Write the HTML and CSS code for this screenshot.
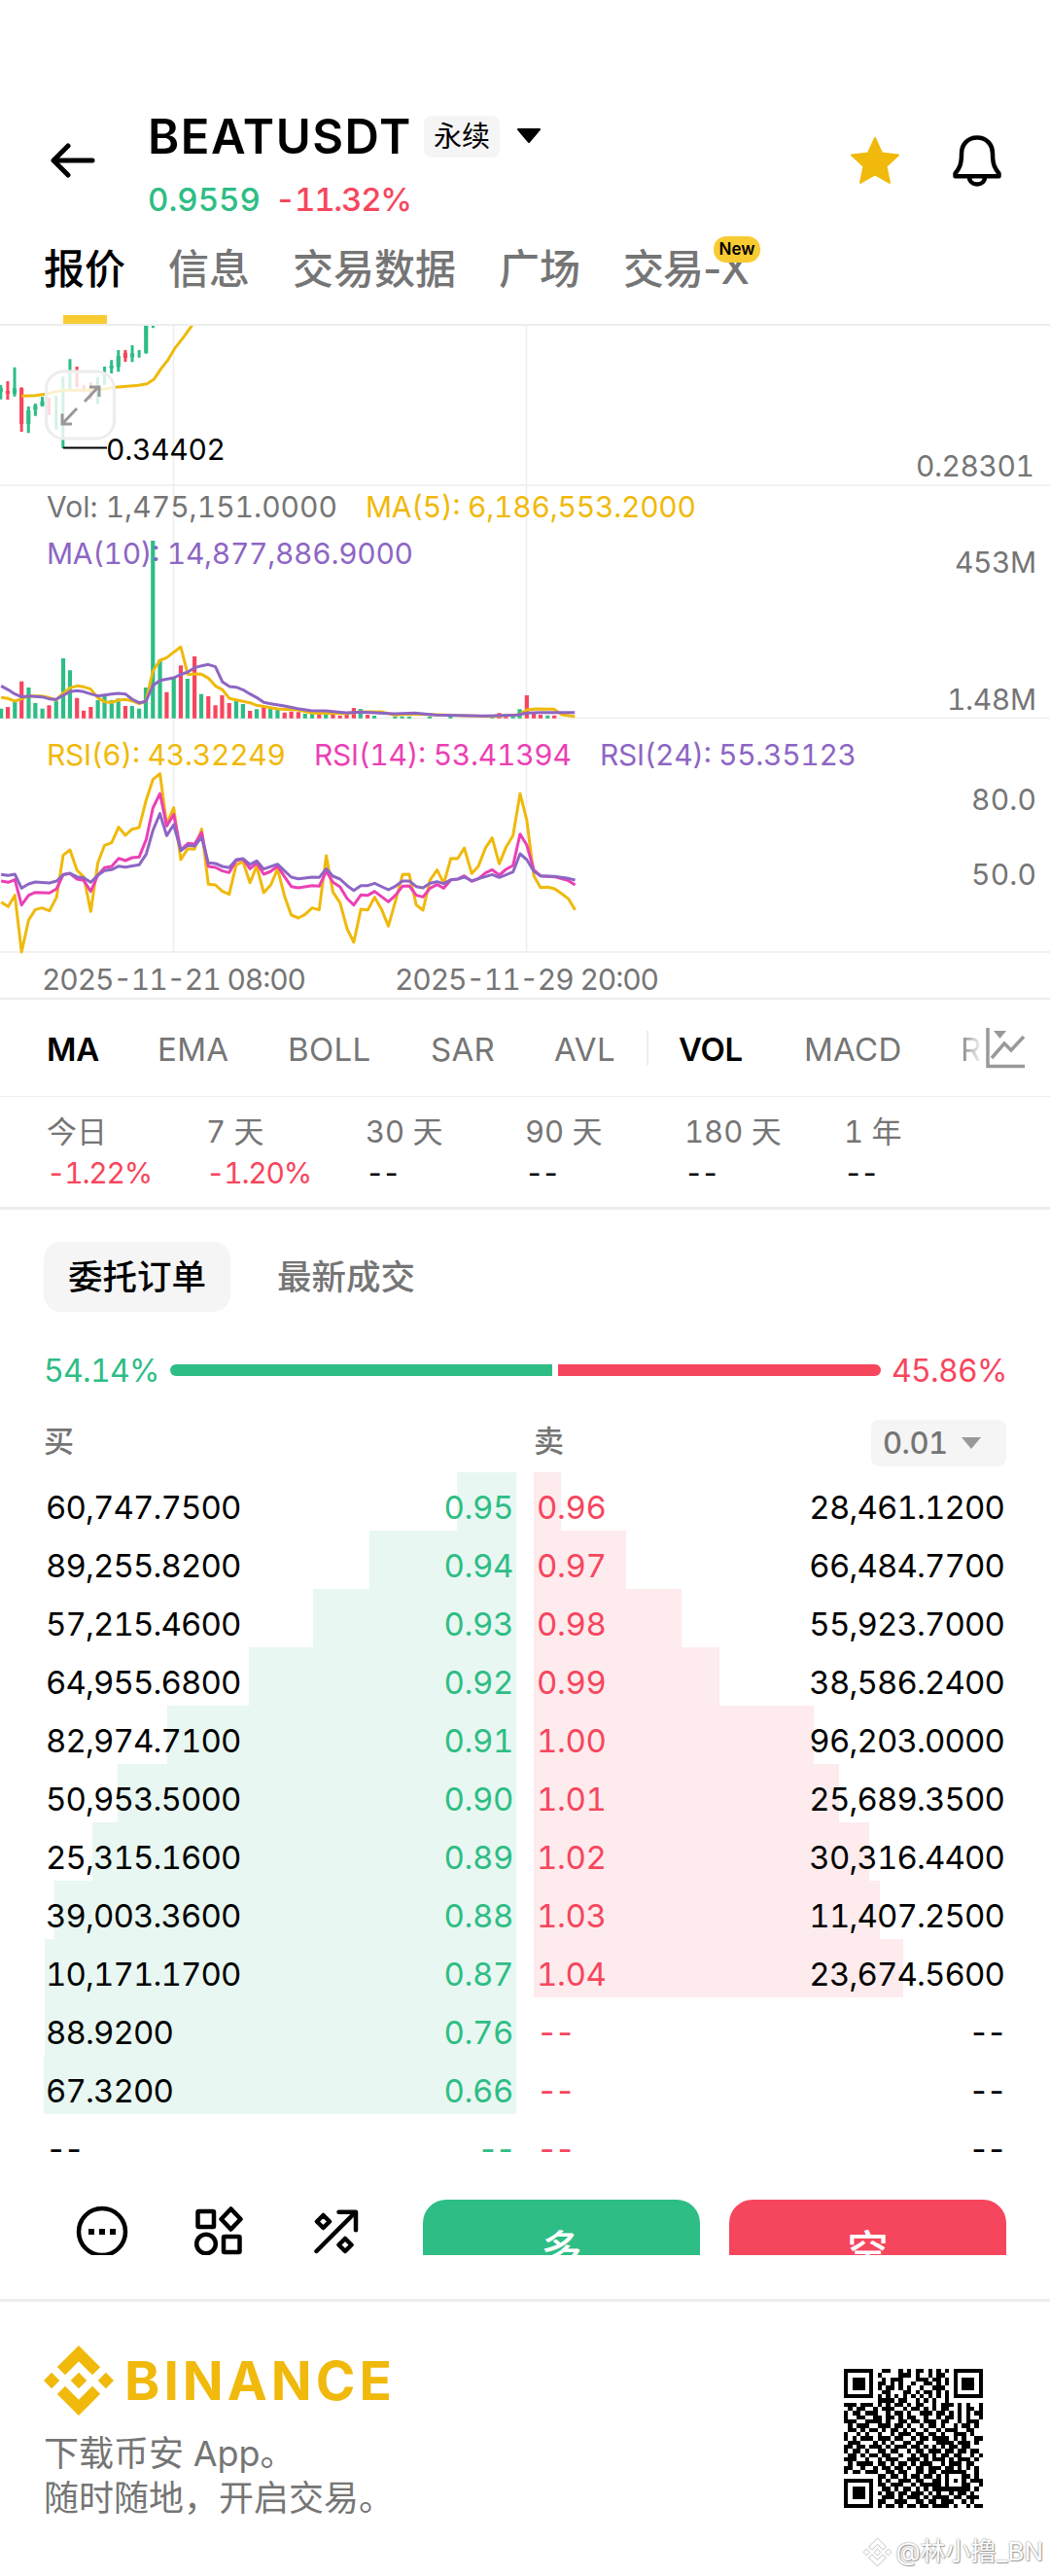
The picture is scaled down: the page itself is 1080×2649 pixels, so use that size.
FILE: index.html
```html
<!DOCTYPE html>
<html lang="zh-CN">
<head>
  <meta charset="UTF-8">
  <meta name="viewport" content="width=device-width, initial-scale=1.0">
  <title>BEATUSDT 永续 | Binance</title>
  <link rel="stylesheet" href="styles.css">
</head>
<body>
  <header class="header">
    <svg class="back" viewBox="0 0 46 36"><path d="M18 3L3 18l15 15M4 18h39"/></svg>
    <div class="pair">
      <div class="pair-title">
        <h1>BEATUSDT</h1>
        <span class="chip">永续</span>
        <svg class="caret" viewBox="0 0 28 18"><path d="M3 2h22L14 15z"/></svg>
      </div>
      <div class="pair-price"><span class="up">0.9559</span><span class="down">-11.32%</span></div>
    </div>
    <svg class="star" viewBox="0 0 52 50"><path d="M26 2l7 15.500 17 2-12.500 11.500 3.500 17L26 39.500 11 48l3.500-17L2 19.500l17-2z"/></svg>
    <svg class="bell" viewBox="0 0 52 54"><path d="M26 3.500c-10 0-16 7.500-16 16.500 0 11-2 15-6.500 20.500v2.800h45v-2.800C44 35 42 31 42 20c0-9-6-16.500-16-16.500zM18 44c0 4.500 3.500 7.500 8 7.500s8-3 8-7.500"/></svg>
  </header>

  <nav class="tabs">
    <span class="tab active">报价</span>
    <span class="tab">信息</span>
    <span class="tab">交易数据</span>
    <span class="tab">广场</span>
    <span class="tab">交易-X<em class="new">New</em></span>
  </nav>

  <section class="chart">
    <svg viewBox="0 335 1080 691" width="1080" height="691">
      <path class="grid" d="M178.500 335V979M541.500 335V979M0 499H1080M0 738.500H1080M0 979H1080"/>

      <!-- price -->
      <svg x="0" y="335" width="620" height="175" viewBox="0 15 1568 525" preserveAspectRatio="none">
        <path class="candle green" d="M2 198V242M38 143V233M74 264V346M92 255V293M110 234V264M146 230V335M164 172V393M182 118V210M254 174V256M272 141V197M290 121V162M308 90V157M344 75V127M362 90V113M380 0V101M398 0V22"/>
        <path class="candle red" d="M20 186V243M56 205V342M128 238V290M200 141V205M218 198V220M236 190V242M326 90V126"/>
        <path class="body green" d="M2 208V220M38 208V225M74 276V318M92 262V274M110 248V262M290 138V146M308 108V142M344 100V112M380 0V98"/>
        <path class="body red" d="M20 216V224M56 208V318M326 98V114"/>
        <path class="line ma5" d="M56 232L92 230L118 226L164 214L200 214L240 213L270 210L300 205L360 199L382 194L400 181L418 149L436 122L454 86L480 46L500 13"/>
      </svg>
      <path class="leader" d="M65 460.500H110"/>
      <text class="black" x="109" y="473" textLength="123">0.34402</text>
      <rect class="expand-box" x="47.500" y="382" width="70" height="69" rx="18"/>
      <path class="expand" d="M87 413l15-16M92 398h10v10M79 420l-15 16M64 425.500V436h10"/>

      <!-- volume -->
      <svg x="0" y="490" width="600" height="260" viewBox="0 0 1568 780" preserveAspectRatio="none">
        <path class="bar green" d="M3 746V716M40 746V696M77 746V651M95 746V699M114 746V716M151 746V692M170 746V561M188 746V598M263 746V690M281 746V678M300 746V690M318 746V685M355 746V708M374 746V716M392 746V651M411 746V198M430 746V565M467 746V622M504 746V624M541 746V671M635 746V692M653 746V702M690 746V718M727 746V712M746 746V720M820 746V732M839 746V732M876 746V732M969 746V717M1006 746V738M1062 746V740M1081 746V740M1100 746V740M1155 746V740M1211 746V741M1323 746V740M1379 746V738M1397 746V718M1472 746V737"/>
        <path class="bar red" d="M21 746V711M58 746V632M132 746V706M207 746V683M225 746V722M244 746V711M337 746V708M448 746V665M486 746V583M523 746V555M560 746V678M579 746V706M597 746V675M616 746V699M672 746V723M709 746V712M765 746V728M783 746V725M802 746V727M858 746V732M895 746V735M914 746V738M932 746V732M951 746V714M988 746V735M1342 746V730M1360 746V738M1416 746V675M1435 746V726M1453 746V735M1490 746V737"/>
      </svg>
      <text class="gray" x="48" y="532" textLength="299">Vol: 1,475,151.0000</text>
      <text class="yellow" x="376" y="532" textLength="340">MA(5): 6,186,553.2000</text>
      <text class="purple" x="48" y="580" textLength="377">MA(10): 14,877,886.9000</text>
      <svg x="0" y="490" width="600" height="260" viewBox="0 0 1568 780" preserveAspectRatio="none">
        <path class="line ma5" d="M3 682L22 685L40 693L58 686L77 677L110 677L132 682L150 690L170 668L188 652L207 646L225 649L244 656L263 683L281 695L300 697L318 690L337 688L355 692L374 701L392 694L411 600L430 567L448 559L467 542L486 526L505 611L523 609L542 610L560 622L579 646L598 658L617 685L635 689L672 698L690 706L746 717L800 720L840 730L930 731L970 726L1025 726L1060 736L1100 733L1180 735L1250 738L1320 740L1395 735L1416 720L1440 717L1490 718L1510 735L1545 740"/>
        <path class="line ma10" d="M3 646L22 658L40 671L58 680L77 677L113 680L132 686L150 688L170 675L188 664L207 661L225 664L244 671L263 677L300 671L318 669L337 671L355 687L374 698L392 694L411 645L430 629L467 621L486 611L505 603L523 590L542 584L560 580L579 587L598 634L617 648L635 650L653 658L672 671L690 682L709 697L728 701L765 708L800 716L835 722L875 723L930 729L970 727L1060 732L1115 730L1170 736L1300 739L1390 736L1416 730L1450 728L1545 728"/>
      </svg>

      <!-- rsi -->
      <svg x="0" y="750" width="600" height="240" viewBox="0 0 1568 720" preserveAspectRatio="none">
        <path class="line ma5" d="M3 533L22 547L40 512L58 687L77 588L95 556L113 551L133 560L152 518L170 388L188 372L207 435L225 455L244 562L263 412L281 358L300 350L319 302L337 327L355 308L374 303L393 218L411 155L430 137L448 292L467 242L486 402L505 368L523 370L542 308L560 478L579 480L598 500L616 509L635 418L653 408L672 473L690 422L709 504L728 480L746 430L765 515L783 573L802 582L820 571L839 551L858 557L877 390L895 502L914 535L933 615L951 657L970 555L989 557L1007 518L1026 556L1044 607L1063 530L1082 448L1100 447L1119 542L1137 558L1156 465L1175 434L1193 475L1212 398L1230 399L1248 366L1268 445L1286 422L1305 366L1323 335L1342 415L1360 364L1379 328L1398 198L1416 280L1435 452L1453 488L1472 487L1491 492L1510 507L1528 523L1546 557"/>
        <path class="line rsi14" d="M3 468L22 472L40 464L58 542L77 512L95 503L133 505L152 492L170 448L188 445L207 462L225 466L244 500L263 450L281 427L300 423L319 398L337 405L355 396L374 394L393 340L411 243L430 198L448 298L467 263L486 372L505 352L523 354L542 318L560 423L579 426L598 437L616 442L635 405L653 400L672 430L690 412L709 447L728 438L746 422L765 455L783 485L802 489L839 482L858 484L877 438L895 472L914 486L933 522L951 542L970 511L989 512L1007 500L1044 532L1063 512L1082 484L1100 483L1119 512L1137 517L1156 490L1175 479L1193 490L1212 464L1230 462L1248 452L1268 469L1286 461L1305 443L1323 433L1342 450L1360 432L1379 420L1398 323L1416 357L1435 434L1453 452L1491 455L1528 467L1546 480"/>
        <path class="line ma10" d="M3 448L22 451L40 447L58 490L77 477L95 471L133 474L152 468L170 449L188 444L207 455L225 458L244 472L263 450L281 436L300 433L319 422L337 425L374 418L393 385L411 312L430 260L448 328L467 294L486 374L505 358L523 360L542 333L560 412L579 414L598 423L616 427L635 402L653 399L672 417L690 406L709 431L746 416L765 437L783 456L802 461L839 456L858 457L877 430L895 453L914 462L933 482L951 497L970 482L989 482L1007 475L1044 495L1063 484L1082 468L1100 468L1119 485L1137 489L1156 475L1175 470L1193 476L1212 464L1230 462L1248 456L1268 467L1286 461L1323 448L1342 457L1360 449L1379 440L1398 384L1416 402L1435 438L1453 452L1491 454L1528 460L1546 465"/>
      </svg>
      <text class="yellow" x="48" y="787" textLength="246">RSI(6): 43.32249</text>
      <text class="magenta" x="323" y="787" textLength="265">RSI(14): 53.41394</text>
      <text class="purple" x="617" y="787" textLength="264">RSI(24): 55.35123</text>

      <text class="gray" x="942" y="490" textLength="122">0.28301</text>
      <text class="gray" x="982" y="589" textLength="84">453M</text>
      <text class="gray" x="974" y="730" textLength="92">1.48M</text>
      <text class="gray" x="999" y="833" textLength="67">80.0</text>
      <text class="gray" x="999" y="910" textLength="67">50.0</text>
      <text class="gray" x="43" y="1018" textLength="272">2025-11-21 08:00</text>
      <text class="gray" x="406" y="1018" textLength="272">2025-11-29 20:00</text>
    </svg>
  </section>

  <section class="indicators">
    <span class="on ma">MA</span>
    <span class="ema">EMA</span>
    <span class="boll">BOLL</span>
    <span class="sar">SAR</span>
    <span class="avl">AVL</span>
    <i class="sep"></i>
    <span class="on vol">VOL</span>
    <span class="macd">MACD</span>
    <span class="fade">R</span>
    <svg class="chart-icon" viewBox="0 0 42 46"><path d="M2 2v39.500h38M6 33l13-15 7 7 13-14"/><path class="solid" d="M8 5h13l-6.500 8z"/></svg>
  </section>

  <section class="periods">
    <div><span>今日</span><b class="down">-1.22%</b></div>
    <div><span>7 天</span><b class="down">-1.20%</b></div>
    <div><span>30 天</span><b>--</b></div>
    <div><span>90 天</span><b>--</b></div>
    <div><span>180 天</span><b>--</b></div>
    <div><span>1 年</span><b>--</b></div>
  </section>

  <section class="book">
    <div class="book-tabs">
      <span class="selected">委托订单</span>
      <span>最新成交</span>
    </div>

    <div class="ratio">
      <span class="up">54.14%</span>
      <div class="ratio-bar"><i class="long"></i><i class="short"></i></div>
      <span class="down">45.86%</span>
    </div>

    <div class="book-head">
      <span>买</span>
      <span class="sell-label">卖</span>
      <span class="step">0.01<svg viewBox="0 0 22 14"><path d="M1 1h20L11 13z"/></svg></span>
    </div>

    <div class="depth">
      <div class="side bids">
        <div class="row"><i style="width:61px"></i><span>60,747.7500</span><b>0.95</b></div>
        <div class="row"><i style="width:151px"></i><span>89,255.8200</span><b>0.94</b></div>
        <div class="row"><i style="width:209px"></i><span>57,215.4600</span><b>0.93</b></div>
        <div class="row"><i style="width:275px"></i><span>64,955.6800</span><b>0.92</b></div>
        <div class="row"><i style="width:359px"></i><span>82,974.7100</span><b>0.91</b></div>
        <div class="row"><i style="width:410px"></i><span>50,953.5000</span><b>0.90</b></div>
        <div class="row"><i style="width:436px"></i><span>25,315.1600</span><b>0.89</b></div>
        <div class="row"><i style="width:475px"></i><span>39,003.3600</span><b>0.88</b></div>
        <div class="row"><i style="width:485px"></i><span>10,171.1700</span><b>0.87</b></div>
        <div class="row"><i style="width:485px"></i><span>88.9200</span><b>0.76</b></div>
        <div class="row"><i style="width:486px"></i><span>67.3200</span><b>0.66</b></div>
        <div class="row empty"><span>--</span><b>--</b></div>
      </div>
      <div class="side asks">
        <div class="row"><i style="width:28px"></i><b>0.96</b><span>28,461.1200</span></div>
        <div class="row"><i style="width:95px"></i><b>0.97</b><span>66,484.7700</span></div>
        <div class="row"><i style="width:152px"></i><b>0.98</b><span>55,923.7000</span></div>
        <div class="row"><i style="width:191px"></i><b>0.99</b><span>38,586.2400</span></div>
        <div class="row"><i style="width:288px"></i><b>1.00</b><span>96,203.0000</span></div>
        <div class="row"><i style="width:314px"></i><b>1.01</b><span>25,689.3500</span></div>
        <div class="row"><i style="width:345px"></i><b>1.02</b><span>30,316.4400</span></div>
        <div class="row"><i style="width:356px"></i><b>1.03</b><span>11,407.2500</span></div>
        <div class="row"><i style="width:380px"></i><b>1.04</b><span>23,674.5600</span></div>
        <div class="row empty"><b>--</b><span>--</span></div>
        <div class="row empty"><b>--</b><span>--</span></div>
        <div class="row empty"><b>--</b><span>--</span></div>
      </div>
    </div>
  </section>

  <section class="actions">
    <svg class="tools" viewBox="0 0 390 57">
      <circle cx="105" cy="33" r="24"/>
      <path class="solid" d="M91 30h6v6h-6zM102 30h6v6h-6zM113 30h6v6h-6z"/>
      <rect x="203.500" y="12" width="16.500" height="16" rx="1"/>
      <path d="M237.500 9.500l10 10.500-10 10.500-10-10.500z"/>
      <circle cx="212" cy="45.500" r="9.800"/>
      <rect x="230" y="38" width="16.500" height="16" rx="1"/>
      <path d="M325.500 53L365 13.500M348.500 12.800h17.500v18.500"/>
      <path d="M332.500 16l6.500 6.500-6.500 6.500-6.500-6.500zM355 40l6.500 6.500-6.500 6.500-6.500-6.500z"/>
    </svg>
    <span class="btn long-btn">多</span>
    <span class="btn short-btn">空</span>
  </section>

  <footer class="footer">
    <div class="brand">
      <div class="logo">
        <svg viewBox="0 0 126.610 126.610"><path id="mark" d="M38.730 53.200l24.590-24.580 24.600 24.600 14.300-14.310L63.320 0 24.430 38.900zM0 63.310l14.300-14.310 14.310 14.310-14.310 14.300zM38.730 73.410l24.590 24.590 24.600-24.600 14.310 14.290-38.910 38.920-38.910-38.890zM98 63.310l14.300-14.310 14.310 14.300-14.310 14.320zM77.830 63.300L63.320 48.780 48.810 63.280l14.510 14.500z"/></svg>
        <strong>BINANCE</strong>
      </div>
      <p>下载币安 App。</p>
      <p>随时随地，开启交易。</p>
    </div>
    <svg class="qr" id="qr" viewBox="0 0 33 33" shape-rendering="crispEdges"></svg>
    <div class="watermark"><svg viewBox="0 0 126.610 126.610"><use href="#mark"/></svg>@林小撸_BN</div>
  </footer>

  <script src="script.js"></script>
</body>
</html>
```
FILE: styles.css
```css
* {
  margin: 0;
  padding: 0;
  box-sizing: border-box;
}

body {
  width: 1080px;
  height: 2649px;
  overflow: hidden;
  background: #fff;
  color: #000;
  font-family: Inter, "Noto Sans CJK SC", sans-serif;
  font-variant-numeric: tabular-nums;
}

svg {
  display: block;
  fill: none;
  flex: none;
}

i, em {
  font-style: normal;
}

.up { color: #2ebd85; }
.down { color: #f6465d; }

.header {
  display: flex;
  height: 234px;
  padding: 110px 49px 0 52px;
}

.back {
  width: 46px;
  height: 36px;
  margin-top: 37px;
  stroke: #000;
  stroke-width: 5;
  stroke-linecap: round;
  stroke-linejoin: round;
}

.pair {
  flex: 1;
  margin-left: 54px;
}

.pair-title {
  display: flex;
  align-items: center;
  height: 60px;
}

.pair-title h1 {
  width: 284px;
  padding-top: 2px;
  font-size: 49px;
  font-weight: 600;
  line-height: 60px;
  letter-spacing: 1.500px;
}

.chip {
  width: 78px;
  height: 43px;
  line-height: 43px;
  text-align: center;
  font-size: 29px;
  border-radius: 8px;
  background: #f5f5f5;
}

.caret {
  width: 28px;
  height: 18px;
  margin-left: 16px;
  fill: #000;
  stroke: #000;
  stroke-width: 2;
  stroke-linejoin: round;
}

.pair-price {
  display: flex;
  gap: 15px;
  margin-top: 15px;
  font-size: 33px;
  font-weight: 500;
  line-height: 40px;
}

.pair-price .down { letter-spacing: -1.200px; }

.star {
  width: 52px;
  height: 50px;
  margin: 30px 53px 0 0;
  fill: #f0b90b;
  stroke: #f0b90b;
  stroke-width: 2;
  stroke-linejoin: round;
}

.bell {
  width: 52px;
  height: 54px;
  margin-top: 28px;
  stroke: #000;
  stroke-width: 4.500;
  stroke-linejoin: round;
}

.tabs {
  display: flex;
  gap: 44px;
  height: 101px;
  padding: 1px 0 0 45px;
  border-bottom: 2px solid #ededed;
  font-size: 42px;
  font-weight: 500;
  font-variant-numeric: normal;
  line-height: 84px;
  color: #757575;
}

.tab {
  position: relative;
}

.tab.active {
  color: #000;
}

.tab.active::after {
  content: "";
  display: block;
  width: 45px;
  height: 9px;
  margin: 5px auto 0;
  background: #f8cb33;
}

.tab:last-child { letter-spacing: -1px; }

.new {
  position: absolute;
  left: 93px;
  top: 8px;
  width: 48px;
  height: 27px;
  border-radius: 13px;
  background: #f8cb33;
  color: #000;
  font-size: 17px;
  font-weight: 600;
  line-height: 27px;
  letter-spacing: 0;
  text-align: center;
}

.chart {
  height: 693px;
  border-bottom: 2px solid #ededed;
}

.chart text { font-size: 30px; }
.chart .black { fill: #000; }
.chart .gray { fill: #757575; }
.chart .yellow { fill: #f0b90b; }
.chart .purple { fill: #8d66c4; }
.chart .magenta { fill: #eb40b5; }

.grid { stroke: #ededed; stroke-width: 1.500; }
.chart path { vector-effect: non-scaling-stroke; }
.candle { stroke-width: 3; }
.body, .bar { stroke-width: 4.200; }
.green { stroke: #2ebd85; }
.red { stroke: #f6465d; }
.line { stroke-width: 3; stroke-linejoin: round; }
.ma5 { stroke: #f0b90b; }
.ma10 { stroke: #8d66c4; }
.rsi14 { stroke: #eb40b5; }
.leader { stroke: #000; stroke-width: 2; }
.expand-box { fill: rgba(255, 255, 255, 0.8); stroke: #ededed; stroke-width: 3; }
.expand { stroke: #999; stroke-width: 3; }

.indicators {
  display: flex;
  align-items: center;
  height: 100px;
  padding-left: 48px;
  border-bottom: 1.500px solid #ededed;
  font-size: 33px;
  color: #757575;
}

.indicators span { flex: none; line-height: 40px; margin-top: 3px; letter-spacing: 0.300px; }
.indicators .on { color: #000; font-weight: 600; letter-spacing: -0.300px; }
.ma { width: 114px; }
.ema { width: 134px; }
.boll { width: 147px; }
.sar { width: 127px; }
.avl { width: 95px; }
.sep { width: 2px; height: 36px; background: #ededed; }
.vol { width: 129px; margin-left: 31px; }
.macd { width: 161px; }

.indicators .fade {
  width: 20px;
  overflow: hidden;
  color: transparent;
  background: linear-gradient(90deg, #858585, #eee);
  -webkit-background-clip: text;
  background-clip: text;
}

.chart-icon {
  width: 42px;
  height: 46px;
  margin-left: 6px;
  stroke: #999;
  stroke-width: 3.500;
}

.solid { fill: #999; stroke: none; }

.periods {
  display: grid;
  grid-template-columns: repeat(6, 164px);
  height: 116px;
  padding: 15px 0 0 48px;
  border-bottom: 3px solid #ededed;
  font-size: 30px;
  line-height: 42px;
}

.periods span {
  display: block;
  font-size: 31px;
  color: #757575;
}

.periods b { font-weight: 400; letter-spacing: -2.500px; }
.periods .down { letter-spacing: -1.200px; }

.book { padding: 33px 45px 0; }

.book-tabs {
  display: flex;
  gap: 23px;
  height: 72px;
  font-size: 35.500px;
  font-weight: 500;
  line-height: 74px;
  color: #757575;
}

.book-tabs span { height: 72px; padding: 0 25px; }
.book-tabs .selected { background: #f5f5f5; color: #000; border-radius: 18px; }

.ratio {
  display: flex;
  align-items: center;
  justify-content: space-between;
  height: 40px;
  margin-top: 40px;
  font-size: 32px;
}

.ratio span { width: 118px; letter-spacing: -0.700px; }
.ratio .up { width: 119px; }
.ratio-bar { display: flex; gap: 6px; width: 731px; height: 12px; margin-left: -1px; }
.ratio-bar i { height: 12px; }
.long { flex: 1; background: #2ebd85; border-radius: 6px 0 0 6px; }
.short { width: 332px; background: #f6465d; border-radius: 0 6px 6px 0; }

.book-head {
  display: flex;
  align-items: center;
  height: 48px;
  margin: 31px 0 6px;
  font-size: 31px;
  font-weight: 500;
  line-height: 44px;
  color: #757575;
}

.book-head span:not(.step) { height: 48px; }
.sell-label { margin-left: 473px; flex: 1; }

.step {
  display: flex;
  align-items: center;
  width: 139px;
  height: 48px;
  padding-left: 12px;
  border-radius: 8px;
  background: #f5f5f5;
  letter-spacing: -0.500px;
}

.step svg { width: 22px; height: 14px; margin-left: 13px; fill: #999; }

.depth { display: flex; gap: 18px; }
.side { width: 486px; }

.row {
  position: relative;
  display: flex;
  justify-content: space-between;
  height: 60px;
  padding: 12px 3px 0 2px;
  font-size: 33px;
  line-height: 48px;
}

.row b, .row span { position: relative; font-weight: 400; letter-spacing: -0.400px; }
.row span { letter-spacing: -0.880px; }
.row.empty b, .row.empty span { letter-spacing: -3px; }
.asks .row { padding: 12px 2px 0 3px; }

/* depth bar behind a row */
.row i {
  position: absolute;
  top: 0;
  height: 60px;
}

.bids i { right: 0; background: #e8f7f1; }
.asks i { left: 0; background: #feebed; }
.bids b { color: #2ebd85; }
.asks b { color: #f6465d; }

.actions {
  display: flex;
  height: 57px;
  margin: 28px 0 45px;
  overflow: hidden;
}

.tools {
  width: 390px;
  height: 57px;
  margin-right: 45px;
  stroke: #000;
  stroke-width: 4.500;
  stroke-linecap: round;
  stroke-linejoin: round;
}

.tools .solid { fill: #000; }

.btn {
  width: 285px;
  height: 104px;
  border-radius: 24px;
  color: #fff;
  font-size: 42px;
  font-weight: 500;
  line-height: 104px;
  text-align: center;
}

.long-btn { background: #2ebd85; margin-right: 30px; }
.short-btn { background: #f6465d; }

.footer {
  position: relative;
  display: flex;
  justify-content: space-between;
  height: 285px;
  padding: 45px 69px 0 45px;
  border-top: 3px solid #ededed;
}

.logo {
  display: flex;
  align-items: center;
  height: 72px;
  margin-bottom: 16px;
  color: #f0b90b;
}

.logo svg { width: 72px; height: 72px; fill: #f0b90b; }
.logo strong { margin-left: 11px; font-size: 55px; font-weight: 700; line-height: 72px; letter-spacing: 4px; }

.footer p {
  font-size: 36px;
  line-height: 46px;
  color: #757575;
}

.qr { width: 143px; height: 143px; margin-top: 24px; fill: #000; }

.watermark {
  position: absolute;
  right: 7px;
  bottom: 8px;
  display: flex;
  align-items: center;
  gap: 4px;
  color: #fff;
  font-size: 26px;
  line-height: 34px;
  text-shadow: 0 0 2px #777, 1px 1px 1px #aaa;
}

.watermark svg {
  width: 29px;
  height: 29px;
  overflow: visible;
  fill: #fff;
  stroke: #bbb;
  stroke-width: 4;
}
```
FILE: script.js
```js
const rows = [
  '111111100110010101101010100111111',
  '100000101000011101001011000100000',
  '101110100101110001110110100101110',
  '101110101101010010011010100101110',
  '101110101011010100100111000101110',
  '100000100110001101011010100100000',
  '111111101010101010101010101011111',
  '000000001111011001010100100000000',
  '111011101010110101100101110101001',
  '010110010111001011010101100101101',
  '101101110010110100111011010101011',
  '100110011011010110010010110101001',
  '111001111010011011011101100101110',
  '010111001110110100101101001011010',
  '011010110101101010010010111001100',
  '100101001001011101101101001110100',
  '101011101110110010110111101010011',
  '011100010101001101100011110111010',
  '110110111010111011010101011011000',
  '101101001101100101101110110110110',
  '011010110110010010110101101100101',
  '111001001011100111010111010111010',
  '010111101101011010111001011101100',
  '110010010110110101101110110101010',
  '101101110011011001101101111110010',
  '000000001101101011011010100011010',
  '111111101010011101100110101010111',
  '100000101101110010111110100011001',
  '101110100110101101010111111111010',
  '101110101011011011101010010110100',
  '101110100111010111010111101101110',
  '100000101100111001101101110010100',
  '111111101011010110110111101001011'
];

const finder = ['11111110', '10000010', '10111010', '10111010', '10111010', '10000010', '11111110', '00000000'];
const align = ['11111', '10001', '10101', '10001', '11111'];

function moduleAt(x, y) {
  if (x > 24 && y < 8) return finder[y][32 - x];
  if (x > 23 && x < 29 && y > 23 && y < 29) return align[y - 24][x - 24];
  return rows[y][x];
}

let d = '';
for (let y = 0; y < 33; y++) {
  for (let x = 0; x < 33; x++) {
    if (moduleAt(x, y) === '1') d += `M${x} ${y}h1v1h-1z`;
  }
}
document.getElementById('qr').innerHTML = `<path d="${d}"/>`;
```
